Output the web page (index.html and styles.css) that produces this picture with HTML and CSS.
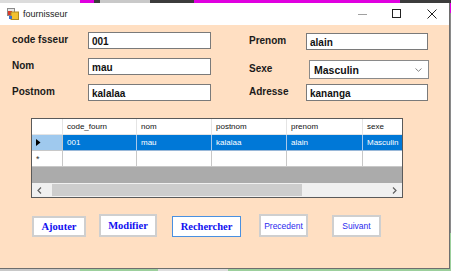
FILE: index.html
```html
<!DOCTYPE html>
<html>
<head>
<meta charset="utf-8">
<link rel="stylesheet" href="styles.css">
</head>
<body>
<div class="desktop">
  <div class="strip top">
    <div class="seg s-light" style="width:80px"></div>
    <div class="seg s-mag" style="width:14px"></div>
    <div class="seg s-dark" style="width:6px"></div>
    <div class="seg s-btn" style="width:50px"></div>
    <div class="seg s-dark" style="width:44px"></div>
    <div class="seg s-mag" style="width:206px"></div>
    <div class="seg s-dark" style="width:51px"></div>
  </div>
  <div class="middle">
    <div class="window">
      <div class="titlebar">
        <svg class="appicon" width="12" height="12" viewBox="0 0 12 12">
          <rect x="0.5" y="0.5" width="7" height="7" fill="#e8e8e8" stroke="#8a8a8a"/>
          <rect x="1" y="3" width="4" height="4" fill="#d83a2a"/>
          <rect x="4" y="4" width="7.5" height="7.5" fill="#f2c230" stroke="#b08a20"/>
          <rect x="2" y="8" width="3" height="3" fill="#3a6fd0"/>
        </svg>
        <span class="title">fournisseur</span>
        <div class="caption-btns">
          <div class="cbtn"><svg width="10" height="10" viewBox="0 0 10 10"><line x1="0" y1="5.5" x2="9" y2="5.5" stroke="#a0a0a0" stroke-width="1"/></svg></div>
          <div class="cbtn"><svg width="10" height="10" viewBox="0 0 10 10"><rect x="0.5" y="0.5" width="8" height="8" fill="none" stroke="#222" stroke-width="1"/></svg></div>
          <div class="cbtn"><svg width="10" height="10" viewBox="0 0 10 10"><path d="M0.5 0.5 L9.5 9.5 M9.5 0.5 L0.5 9.5" stroke="#222" stroke-width="1"/></svg></div>
        </div>
      </div>
      <div class="client">
        <div class="form">
          <div class="col left">
            <div class="row r1"><span class="lbl">code fsseur</span><div class="tb w123">001</div></div>
            <div class="row r2"><span class="lbl">Nom</span><div class="tb w123">mau</div></div>
            <div class="row r3"><span class="lbl">Postnom</span><div class="tb w123">kalalaa</div></div>
          </div>
          <div class="col right">
            <div class="row r1"><span class="lbl">Prenom</span><div class="tb w122">alain</div></div>
            <div class="row r2"><span class="lbl">Sexe</span><div class="combo"><span>Masculin</span><svg width="7" height="4" viewBox="0 0 7 4"><path d="M0.5 0.5 L3.5 3.3 L6.5 0.5" fill="none" stroke="#777" stroke-width="0.9"/></svg></div></div>
            <div class="row r3"><span class="lbl">Adresse</span><div class="tb w122">kananga</div></div>
          </div>
        </div>

        <div class="grid">
          <div class="grow head">
            <div class="rh"></div>
            <div class="c c1">code_fourn</div>
            <div class="c c2">nom</div>
            <div class="c c3">postnom</div>
            <div class="c c4">prenom</div>
            <div class="c c5">sexe</div>
          </div>
          <div class="grow sel">
            <div class="rh"><svg width="5" height="7" viewBox="0 0 5 7"><path d="M0 0 L4.5 3.5 L0 7 Z" fill="#000"/></svg></div>
            <div class="c c1">001</div>
            <div class="c c2">mau</div>
            <div class="c c3">kalalaa</div>
            <div class="c c4">alain</div>
            <div class="c c5">Masculin</div>
          </div>
          <div class="grow new">
            <div class="rh"><span class="star">*</span></div>
            <div class="c c1"></div>
            <div class="c c2"></div>
            <div class="c c3"></div>
            <div class="c c4"></div>
            <div class="c c5"></div>
          </div>
          <div class="gempty"></div>
          <div class="hscroll">
            <div class="arrow"><svg width="5" height="7" viewBox="0 0 5 7"><path d="M4 0.5 L1 3.5 L4 6.5" fill="none" stroke="#606060" stroke-width="1.2"/></svg></div>
            <div class="track"><div class="thumb"></div></div>
            <div class="arrow"><svg width="5" height="7" viewBox="0 0 5 7"><path d="M1 0.5 L4 3.5 L1 6.5" fill="none" stroke="#606060" stroke-width="1.2"/></svg></div>
          </div>
        </div>

        <div class="buttons">
          <button class="btn serif b-aj">Ajouter</button>
          <button class="btn serif b-mod">Modifier</button>
          <button class="btn serif b-rech">Rechercher</button>
          <button class="btn sans b-prec">Precedent</button>
          <button class="btn sans b-suiv">Suivant</button>
        </div>
      </div>
    </div>
    <div class="rightstrip"></div>
  </div>
  <div class="strip bottom">
    <div class="seg s-gray" style="width:80px"></div>
    <div class="seg s-green" style="width:78px"></div>
    <div class="seg s-light2" style="width:70px"></div>
    <div class="seg s-green" style="width:223px"></div>
  </div>
</div>
</body>
</html>
```

FILE: styles.css
```css
* { box-sizing: border-box; }
html, body { margin: 0; padding: 0; }
body {
  width: 451px;
  height: 271px;
  overflow: hidden;
  font-family: "Liberation Sans", Arial, sans-serif;
  background: #3a3a3a;
}
.desktop { width: 451px; height: 271px; display: flex; flex-direction: column; }
.strip { display: flex; flex: none; }
.strip.top { height: 3px; }
.strip.bottom { height: 2px; }
.seg { height: 100%; flex: none; }
.s-light { background: #dcdcdc; }
.s-mag { background: #e000e0; }
.s-dark { background: #3c3c3c; }
.s-btn { background: #c9c9c9; }
.s-gray { background: #c8c8c8; }
.s-green { background: #9ccf9c; }
.s-light2 { background: #dedede; }

.middle { display: flex; height: 266px; flex: none; }
.rightstrip { width: 1px; background: linear-gradient(#e000e0 0 10px, #8a8a8a 10px 230px, #9ccf9c 230px); }

.window {
  width: 450px;
  height: 266px;
  border-right: 1px solid #6e6e6e;
  border-bottom: 1px solid #6e6e6e;
  display: flex;
  flex-direction: column;
  background: #ffdfc2;
}
.titlebar {
  height: 22px;
  flex: none;
  background: #fff;
  display: flex;
  align-items: center;
  padding-left: 7px;
}
.appicon { flex: none; margin-top: -1px; }
.title { font-size: 9px; color: #222; margin-left: 4px; margin-top: -1px; }
.caption-btns { margin-left: auto; display: flex; height: 100%; }
.cbtn { width: 34px; height: 100%; display: flex; align-items: center; justify-content: center; }
.cbtn:last-child { width: 35px; }

.client { flex: 1; display: flex; flex-direction: column; }

.form { display: flex; padding-top: 7px; }
.col { display: flex; flex-direction: column; }
.col.left { padding-left: 12px; width: 249px; }
.row { display: flex; align-items: center; }
.lbl { font-weight: bold; font-size: 10px; color: #1a1a1a; margin-top: -3px; }
.left .lbl { width: 76px; }
.right .lbl { width: 57px; }
.left .r2 { margin-top: 9px; }
.left .r3 { margin-top: 9px; }
.right .r1 { margin-top: 1px; }
.right .r2 { margin-top: 10px; }
.right .r3 { margin-top: 5px; }

.tb {
  height: 17px;
  background: #fff;
  border: 1px solid #7a7a7a;
  font-weight: bold;
  font-size: 10px;
  color: #111;
  padding: 3px 0 0 3px;
  line-height: 11px;
}
.w123 { width: 123px; }
.w122 { width: 122px; }
.combo {
  width: 120px;
  height: 19px;
  margin-left: 3px;
  background: #fff;
  border: 1px solid #8a8a8a;
  display: flex;
  align-items: center;
  justify-content: space-between;
  padding: 0 6px 0 4px;
  font-weight: bold;
  font-size: 10.5px;
  color: #111;
}

.grid {
  margin: 17px 0 0 31px;
  width: 372px;
  height: 80px;
  border: 1px solid #5a5a5a;
  background: #ababab;
  display: flex;
  flex-direction: column;
  font-size: 8px;
}
.grow { display: flex; height: 16px; flex: none; }
.rh { width: 31px; flex: none; border-right: 1px solid #c8c8c8; border-bottom: 1px solid #c8c8c8; background: #fff; display: flex; align-items: center; padding-left: 4px; }
.c { flex: none; border-right: 1px solid #c8c8c8; border-bottom: 1px solid #c8c8c8; background: #fff; padding: 3px 0 0 4px; color: #000; white-space: nowrap; overflow: hidden; }
.c1 { width: 74px; }
.c2 { width: 75px; }
.c3 { width: 75px; }
.c4 { width: 76px; }
.c5 { width: 39px; border-right: none; }
.head .c, .head .rh { border-bottom: 1px solid #e4e4e4; border-right-color: #e4e4e4; }
.head .c { color: #111; }
.sel .rh { background: #9fc9ee; }
.sel .c { background: #0078d7; color: #fff; border-right-color: #a8c8ea; border-bottom-color: #9ab8d8; }
.star { font-size: 9px; line-height: 9px; margin-top: 2px; color: #333; }
.gempty { flex: 1; }
.hscroll { height: 14px; display: flex; background: #f0f0f0; flex: none; }
.arrow { width: 15px; display: flex; align-items: center; justify-content: center; flex: none; }
.track { flex: 1; display: flex; align-items: center; }
.thumb { width: 250px; height: 12px; background: #cdcdcd; margin-left: 5px; }

.buttons { display: flex; align-items: flex-start; margin-top: 16px; padding-left: 32px; }
.btn {
  background: #fff;
  color: #1010f0;
  border: 2px solid #cfcfcf;
  padding: 0;
  margin: 0;
  flex: none;
  display: flex;
  align-items: center;
  justify-content: center;
}
.serif { font-family: "Liberation Serif", "Times New Roman", serif; font-weight: bold; font-size: 10.5px; }
.sans { font-family: "Liberation Sans", Arial, sans-serif; font-size: 8.5px; color: #2a2aee; }
.b-aj { width: 54px; height: 21px; margin-top: 2px; }
.b-mod { width: 58px; height: 23px; margin-left: 13px; }
.b-rech { width: 69px; height: 21px; margin-left: 15px; margin-top: 2px; border: 1px solid #4a90e0; }
.b-prec { width: 49px; height: 23px; margin-left: 18px; }
.b-suiv { width: 49px; height: 22px; margin-left: 24px; margin-top: 1px; }
```
